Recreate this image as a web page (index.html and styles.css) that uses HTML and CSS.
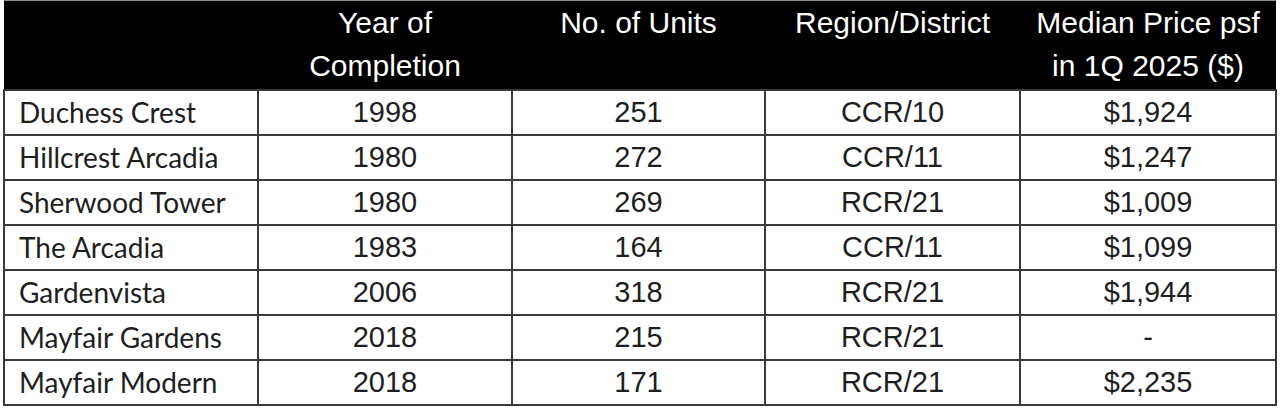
FILE: index.html
```html
<!DOCTYPE html>
<html lang="en">
<head>
<meta charset="utf-8">
<title>Condo comparison</title>
<link rel="stylesheet" href="styles.css">
</head>
<body>
<table class="data">
  <colgroup>
    <col class="c1"><col class="c2"><col class="c3"><col class="c4"><col class="c5">
  </colgroup>
  <thead>
    <tr>
      <th></th>
      <th>Year of<br>Completion</th>
      <th>No. of Units</th>
      <th>Region/District</th>
      <th>Median Price psf<br>in 1Q 2025 ($)</th>
    </tr>
  </thead>
  <tbody>
    <tr><td class="name">Duchess Crest</td><td>1998</td><td>251</td><td>CCR/10</td><td>$1,924</td></tr>
    <tr><td class="name">Hillcrest Arcadia</td><td>1980</td><td>272</td><td>CCR/11</td><td>$1,247</td></tr>
    <tr><td class="name">Sherwood Tower</td><td>1980</td><td>269</td><td>RCR/21</td><td>$1,009</td></tr>
    <tr><td class="name">The Arcadia</td><td>1983</td><td>164</td><td>CCR/11</td><td>$1,099</td></tr>
    <tr><td class="name">Gardenvista</td><td>2006</td><td>318</td><td>RCR/21</td><td>$1,944</td></tr>
    <tr><td class="name">Mayfair Gardens</td><td>2018</td><td>215</td><td>RCR/21</td><td>-</td></tr>
    <tr><td class="name">Mayfair Modern</td><td>2018</td><td>171</td><td>RCR/21</td><td>$2,235</td></tr>
  </tbody>
</table>
</body>
</html>
```
FILE: styles.css
```css
html, body {
  margin: 0;
  padding: 0;
  background: #ffffff;
}
body {
  padding: 0 0 0 3px;
}
.data {
  border-collapse: collapse;
  table-layout: fixed;
  width: 1272px;
  border-top: 1px solid #8a8a8a;
  font-family: "Liberation Sans", Arial, sans-serif;
  color: #1e1e1e;
}
.c1 { width: 254px; }
.c2 { width: 254px; }
.c3 { width: 253px; }
.c4 { width: 255px; }
.c5 { width: 256px; }
.data thead th {
  background: #000000;
  color: #ffffff;
  font-weight: normal;
  font-size: 30px;
  line-height: 43px;
  height: 88px;
  padding: 0;
  vertical-align: top;
  text-align: center;
  border: 0;
}
.data tbody td {
  height: 43px;
  padding: 0;
  border: 2px solid #3a3a3a;
  text-align: center;
  font-size: 29px;
  line-height: 43px;
}
.data tbody td.name {
  text-align: left;
  padding-left: 14px;
  font-family: Lato, "Open Sans", sans-serif;
  font-size: 28px;
}
```
